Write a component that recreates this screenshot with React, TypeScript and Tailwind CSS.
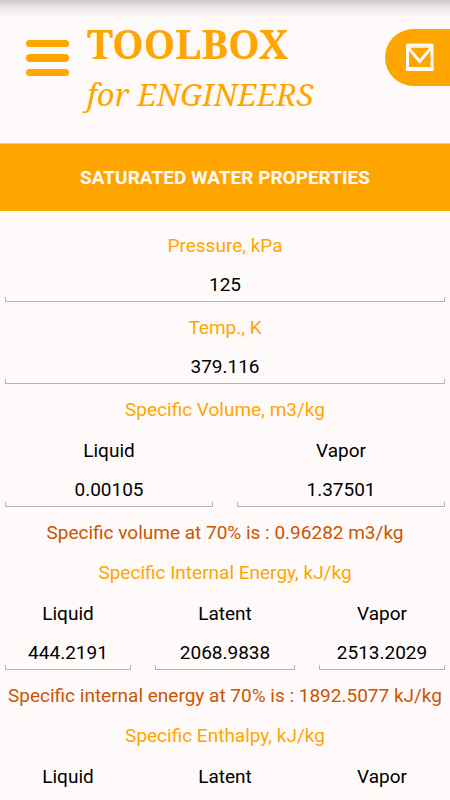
import { useState } from "react";

interface Column {
    label: string;
    value: string;
}

interface Property {
    title: string;
    columns: Column[];
    result: string;
}

const properties: Property[] = [
    {
        title: "Specific Volume, m3/kg",
        columns: [
            { label: "Liquid", value: "0.00105" },
            { label: "Vapor", value: "1.37501" },
        ],
        result: "Specific volume at 70% is : 0.96282 m3/kg",
    },
    {
        title: "Specific Internal Energy, kJ/kg",
        columns: [
            { label: "Liquid", value: "444.2191" },
            { label: "Latent", value: "2068.9838" },
            { label: "Vapor", value: "2513.2029" },
        ],
        result: "Specific internal energy at 70% is : 1892.5077 kJ/kg",
    },
];

interface FieldProps {
    id: string;
    label: string;
    initial: string;
    accent?: boolean;
}

const Field = ({ id, label, initial, accent }: FieldProps) => {
    const [value, setValue] = useState(initial);

    return (
        <div className="min-w-0">
            <label htmlFor={id} className={`block h-[41px] text-center leading-10 ${accent ? "text-[#ffa500]" : "text-black"}`}>
                {label}
            </label>
            <div className="relative h-[41px]">
                <input
                    id={id}
                    value={value}
                    inputMode="decimal"
                    onChange={(e) => setValue(e.target.value)}
                    className="block h-[34px] w-full bg-transparent text-center text-black outline-none"
                />
                {/* Bracket shaped underline */}
                <span className="pointer-events-none absolute inset-x-0 bottom-[6px] h-[5px] border-x border-b border-[#b5b3b3]" />
            </div>
        </div>
    );
};

const Header = () => (
    <header className="flex h-[143px] items-start bg-linear-to-b from-[#cbc7c7] via-[#e9e5e5] via-[7px] to-[#fffafa] to-[18px] pl-[26px]">
        <button type="button" aria-label="Menu" className="mt-10 flex w-[43px] flex-col gap-[7px]">
            <span className="h-[7px] w-full rounded-full bg-[#ffa500]" />
            <span className="h-[8px] w-full rounded-full bg-[#ffa500]" />
            <span className="h-[7px] w-full rounded-full bg-[#ffa500]" />
        </button>
        <h1 className="ml-[18px] mt-[19px] whitespace-nowrap font-['Noto_Serif','Liberation_Serif',serif] text-[#ffa500]">
            <span className="block text-[40px] font-bold leading-[50px]">TOOLBOX</span>
            <span className="block text-[31px] italic leading-[50px]">for ENGINEERS</span>
        </h1>
        <button type="button" aria-label="Contact" className="ml-auto mt-[29px] flex h-[57px] w-[65px] items-center rounded-l-full bg-[#ffa500] pl-5">
            <svg width="29" height="29" viewBox="0 0 29 29" fill="none" stroke="#fffafa">
                <path d="M2.5 2H27V26H2.5Z" strokeWidth="3" strokeLinejoin="round" />
                <path d="M2.5 26H27" strokeWidth="4" strokeLinecap="round" />
                <path d="M3.5 4H26" strokeWidth="1.5" />
                <path d="M3.5 5L14.75 18.5L26 5" strokeWidth="2.8" />
            </svg>
        </button>
    </header>
);

export default function App() {
    return (
        <div className="h-screen overflow-hidden bg-[#fffafa] font-['Roboto',sans-serif] text-[19px]">
            <Header />
            <h2 className="flex h-[68px] items-center justify-center border-t border-[#d5cfc8] bg-[#ffa500] pt-[2px] font-bold text-[#fffafa]">
                SATURATED WATER PROPERTIES
            </h2>
            <main className="px-[5px] pt-[15px]">
                <Field id="pressure" label="Pressure, kPa" initial="125" accent />
                <Field id="temp" label="Temp., K" initial="379.116" accent />
                {properties.map((property, i) => (
                    <section key={property.title}>
                        <h3 className="h-[41px] text-center leading-10 text-[#ffa500]">{property.title}</h3>
                        <div className={`grid gap-6 ${property.columns.length === 3 ? "grid-cols-[9fr_10fr_9fr]" : "grid-cols-2"}`}>
                            {property.columns.map((column) => (
                                <Field key={column.label} id={`${column.label}-${i}`} label={column.label} initial={column.value} />
                            ))}
                        </div>
                        <p className="whitespace-nowrap text-center leading-10 text-[#cc5500]">{property.result}</p>
                    </section>
                ))}
                <section>
                    <h3 className="h-[41px] text-center leading-10 text-[#ffa500]">Specific Enthalpy, kJ/kg</h3>
                    <div className="grid grid-cols-[9fr_10fr_9fr] gap-6">
                        <Field id="enthalpy-liquid" label="Liquid" initial="" />
                        <Field id="enthalpy-latent" label="Latent" initial="" />
                        <Field id="enthalpy-vapor" label="Vapor" initial="" />
                    </div>
                </section>
            </main>
        </div>
    );
}
